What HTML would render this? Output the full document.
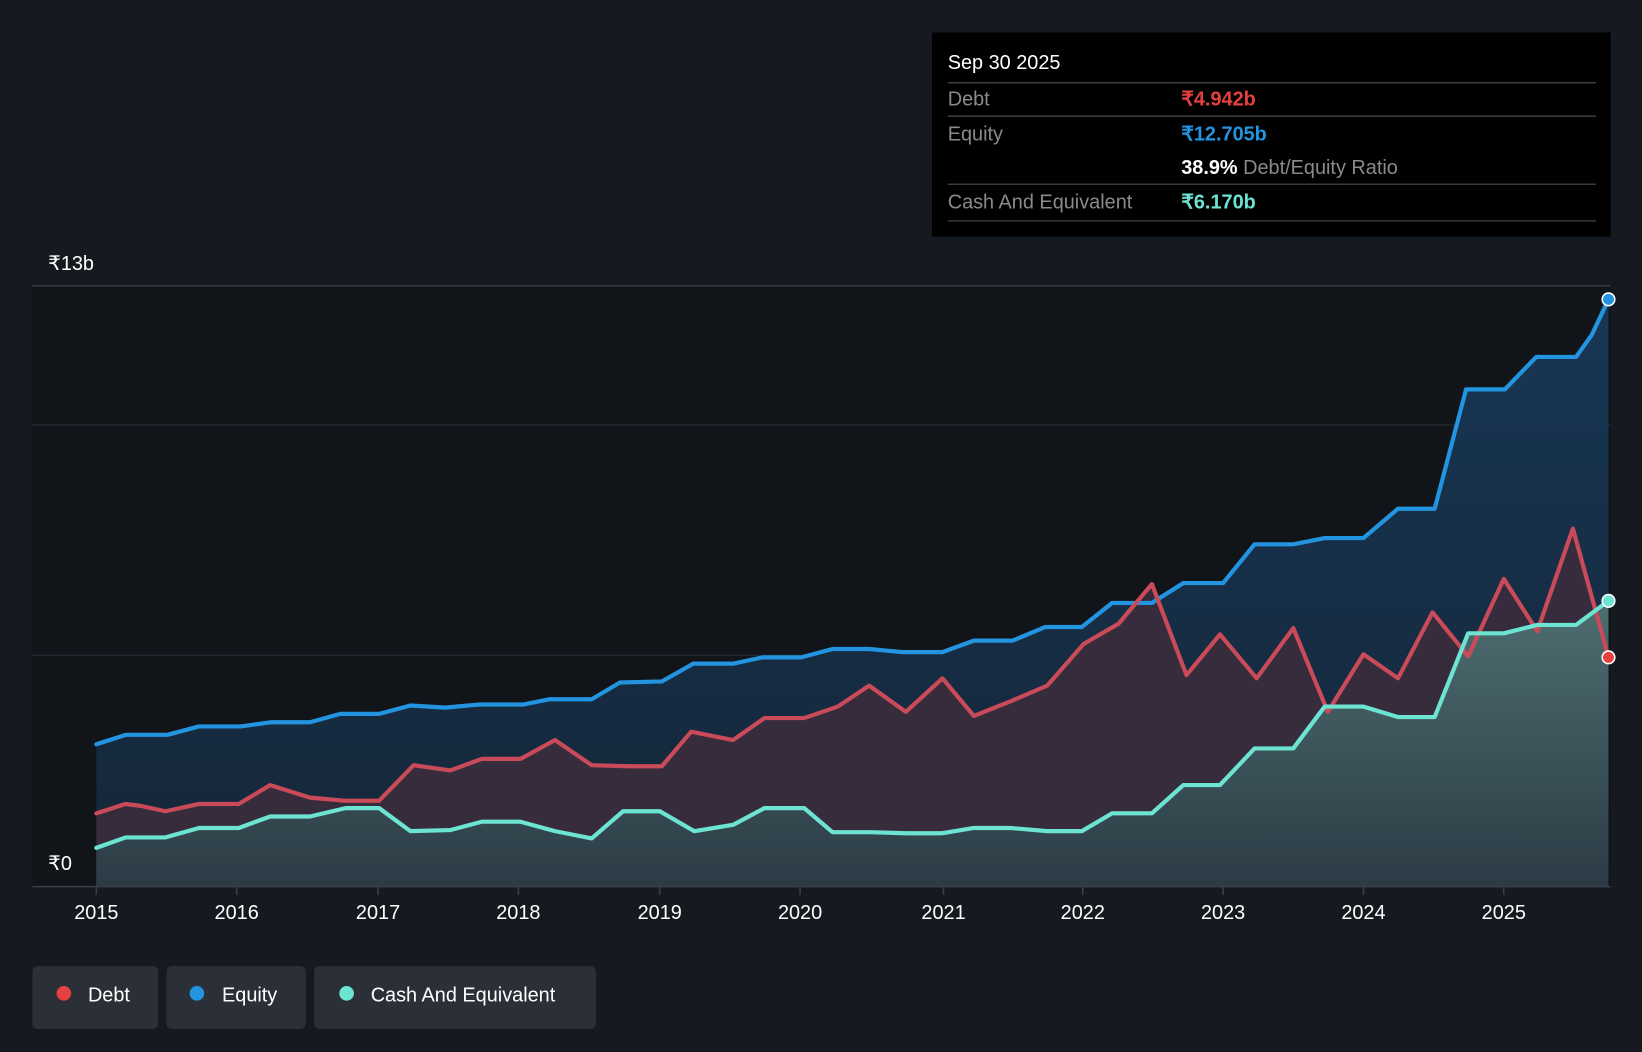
<!DOCTYPE html>
<html><head><meta charset="utf-8"><style>
html,body{margin:0;padding:0;background:#151a21;width:1642px;height:1052px;overflow:hidden}
svg{display:block}
text{font-family:"Liberation Sans",sans-serif}
</style></head><body>
<svg width="1642" height="1052" viewBox="0 0 1568 1005" preserveAspectRatio="none">
<defs>
<linearGradient id="eq" x1="0" y1="0" x2="0" y2="1"><stop offset="0" stop-color="#183654"/><stop offset="1" stop-color="#152638"/></linearGradient>
<linearGradient id="cs" x1="0" y1="0" x2="0" y2="1"><stop offset="0" stop-color="#4d6e70"/><stop offset="1" stop-color="#2c3b45"/></linearGradient>
</defs>
<rect x="0" y="0" width="1568" height="1005" fill="#151a21"/>
<rect x="31" y="273" width="1507" height="574" fill="#111419"/>
<line x1="31" y1="273" x2="1538" y2="273" stroke="#3a3f47" stroke-width="1.5"/>
<line x1="31" y1="406" x2="1538" y2="406" stroke="#2a2f36" stroke-width="1"/>
<line x1="31" y1="626" x2="1538" y2="626" stroke="#2a2f36" stroke-width="1"/>
<polygon fill="url(#eq)" points="92,847 92,711 120,702 160,702 190,694 230,694 258,690 296,690 325,682 362,682 392,674 425,676 458,673 500,673 525,668 565,668 592,652 632,651 662,634 700,634 728,628 765,628 795,620 830,620 862,623 900,623 930,612 967,612 998,599 1033,599 1062,576 1100,576 1130,557 1168,557 1198,520 1235,520 1265,514 1302,514 1335,486 1370,486 1400,372 1437,372 1467,341 1505,341 1520,320 1536,286 1536,847"/>
<polygon fill="#3a2c3c" fill-opacity="0.9" points="92,847 92,777 120,768 135,770 158,775 190,768 228,768 258,750 296,762 330,765 362,765 395,731 430,736 460,725 497,725 530,707 565,731 600,732 632,732 660,699 700,707 730,686 768,686 800,675 830,655 865,680 900,648 930,684 965,670 1000,655 1035,615 1068,596 1100,558 1133,645 1165,606 1200,648 1235,600 1268,680 1302,625 1335,648 1368,585 1402,627 1436,553 1468,603 1502,505 1536,628 1536,847"/>
<polygon fill="url(#cs)" points="92,847 92,810 120,800 158,800 190,791 228,791 258,780 296,780 330,772 362,772 392,794 430,793 460,785 497,785 530,794 565,801 595,775 630,775 663,794 700,788 730,772 768,772 795,795 830,795 865,796 900,796 930,791 965,791 1000,794 1033,794 1062,777 1100,777 1130,750 1165,750 1198,715 1235,715 1265,675 1302,675 1335,685 1370,685 1402,605 1436,605 1468,597 1505,597 1536,574 1536,847"/>
<g fill="none" stroke-width="4" stroke-linejoin="round" stroke-linecap="round">
<polyline stroke="#2394df" points="92,711 120,702 160,702 190,694 230,694 258,690 296,690 325,682 362,682 392,674 425,676 458,673 500,673 525,668 565,668 592,652 632,651 662,634 700,634 728,628 765,628 795,620 830,620 862,623 900,623 930,612 967,612 998,599 1033,599 1062,576 1100,576 1130,557 1168,557 1198,520 1235,520 1265,514 1302,514 1335,486 1370,486 1400,372 1437,372 1467,341 1505,341 1520,320 1536,286"/>
<polyline stroke="#c94a58" points="92,777 120,768 135,770 158,775 190,768 228,768 258,750 296,762 330,765 362,765 395,731 430,736 460,725 497,725 530,707 565,731 600,732 632,732 660,699 700,707 730,686 768,686 800,675 830,655 865,680 900,648 930,684 965,670 1000,655 1035,615 1068,596 1100,558 1133,645 1165,606 1200,648 1235,600 1268,680 1302,625 1335,648 1368,585 1402,627 1436,553 1468,603 1502,505 1536,628"/>
<polyline stroke="#6de3d2" points="92,810 120,800 158,800 190,791 228,791 258,780 296,780 330,772 362,772 392,794 430,793 460,785 497,785 530,794 565,801 595,775 630,775 663,794 700,788 730,772 768,772 795,795 830,795 865,796 900,796 930,791 965,791 1000,794 1033,794 1062,777 1100,777 1130,750 1165,750 1198,715 1235,715 1265,675 1302,675 1335,685 1370,685 1402,605 1436,605 1468,597 1505,597 1536,574"/>
</g>
<circle cx="1536" cy="286" r="6" fill="#2394df" stroke="#fff" stroke-width="1.5"/>
<circle cx="1536" cy="574" r="6" fill="#6de3d2" stroke="#fff" stroke-width="1.5"/>
<circle cx="1536" cy="628" r="6" fill="#e64141" stroke="#fff" stroke-width="1.5"/>
<line x1="31" y1="847" x2="1538" y2="847" stroke="#3a3f47" stroke-width="1.5"/>
<g stroke="#3a3f47" stroke-width="1.5">
<line x1="92" y1="847" x2="92" y2="855"/><line x1="226" y1="847" x2="226" y2="855"/><line x1="361" y1="847" x2="361" y2="855"/><line x1="495" y1="847" x2="495" y2="855"/><line x1="630" y1="847" x2="630" y2="855"/><line x1="764" y1="847" x2="764" y2="855"/><line x1="901" y1="847" x2="901" y2="855"/><line x1="1034" y1="847" x2="1034" y2="855"/><line x1="1168" y1="847" x2="1168" y2="855"/><line x1="1302" y1="847" x2="1302" y2="855"/><line x1="1436" y1="847" x2="1436" y2="855"/>
</g>
<g fill="#fff" font-size="19" text-anchor="middle">
<text x="92" y="878">2015</text><text x="226" y="878">2016</text><text x="361" y="878">2017</text><text x="495" y="878">2018</text><text x="630" y="878">2019</text><text x="764" y="878">2020</text><text x="901" y="878">2021</text><text x="1034" y="878">2022</text><text x="1168" y="878">2023</text><text x="1302" y="878">2024</text><text x="1436" y="878">2025</text>
</g>
<text x="46" y="258" fill="#fff" font-size="19">₹13b</text>
<text x="46" y="831" fill="#fff" font-size="19">₹0</text>
<rect x="890" y="31" width="648" height="195" fill="#000"/>
<text x="905" y="66" fill="#fff" font-size="19">Sep 30 2025</text>
<g stroke="#3a3a3a" stroke-width="1.5">
<line x1="905" y1="79" x2="1524" y2="79"/><line x1="905" y1="111" x2="1524" y2="111"/><line x1="905" y1="176" x2="1524" y2="176"/><line x1="905" y1="211" x2="1524" y2="211"/>
</g>
<g font-size="19">
<text x="905" y="101" fill="#8a8a8a">Debt</text><text x="1128" y="101" fill="#e64141" font-weight="bold">₹4.942b</text>
<text x="905" y="134" fill="#8a8a8a">Equity</text><text x="1128" y="134" fill="#2394df" font-weight="bold">₹12.705b</text>
<text x="1128" y="166" fill="#fff" font-weight="bold">38.9% <tspan fill="#8a8a8a" font-weight="normal">Debt/Equity Ratio</tspan></text>
<text x="905" y="199" fill="#8a8a8a">Cash And Equivalent</text><text x="1128" y="199" fill="#6de3d2" font-weight="bold">₹6.170b</text>
</g>
<rect x="31" y="923" width="120" height="60" rx="5" fill="#2b2f37"/>
<rect x="159" y="923" width="133" height="60" rx="5" fill="#2b2f37"/>
<rect x="300" y="923" width="269" height="60" rx="5" fill="#2b2f37"/>
<circle cx="61" cy="949" r="7" fill="#e64141"/>
<circle cx="188" cy="949" r="7" fill="#2394df"/>
<circle cx="331" cy="949" r="7" fill="#6de3d2"/>
<g fill="#fff" font-size="19">
<text x="84" y="957">Debt</text><text x="212" y="957">Equity</text><text x="354" y="957">Cash And Equivalent</text>
</g>
</svg>
</body></html>
